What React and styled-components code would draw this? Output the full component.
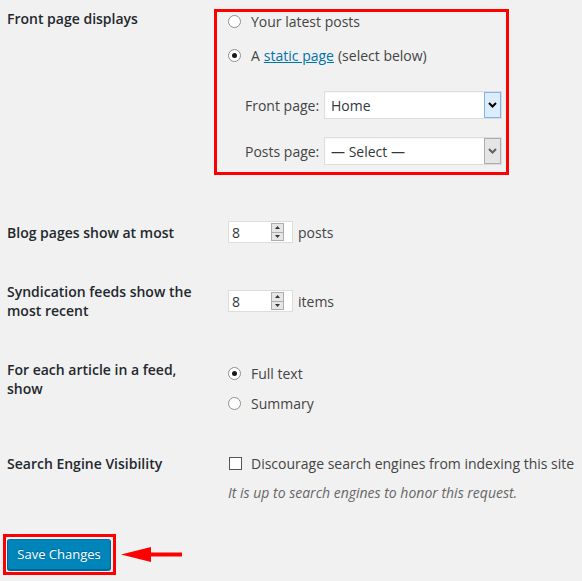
import styled, { createGlobalStyle } from "styled-components";

const GlobalStyle = createGlobalStyle`
  body {
    margin: 0;
    background: #f1f1f1;
    font-family: "Open Sans", "Liberation Sans", sans-serif;
    font-size: 14px;
    color: #444;
  }
`;

const Page = styled.div`
  width: 582px;
  height: 581px;
  overflow: hidden;
`;

const Row = styled.div`
  display: grid;
  grid-template-columns: 214px 1fr;
  align-items: ${(p) => p.$align || "start"};
  margin-top: ${(p) => p.$top || 0}px;
`;

const Label = styled.div`
  padding: ${(p) => p.$pad || 0}px 0 0 7px;
  width: 200px;
  font-weight: 600;
  color: #23282d;
  line-height: 19px;
`;

const Field = styled.div`
  padding: ${(p) => p.$pad || 0}px 0 0 14px;
`;

const Highlight = styled.div`
  margin-top: 9px;
  width: 295px;
  box-sizing: border-box;
  border: 3px solid #ff0000;
  padding: 0 0 7px 11px;
`;

const Line = styled.div`
  display: flex;
  align-items: center;
  height: 19px;
  line-height: 19px;
  margin-top: ${(p) => p.$top || 0}px;
  white-space: nowrap;
`;

const Radio = styled.span`
  width: 13px;
  height: 13px;
  box-sizing: border-box;
  border: 1px solid #8f8f8f;
  border-radius: 50%;
  background: #fff;
  margin-right: 10px;
  display: flex;
  align-items: center;
  justify-content: center;
  flex-shrink: 0;
  &::after {
    content: "";
    width: 5px;
    height: 5px;
    border-radius: 50%;
    background: ${(p) => (p.$checked ? "#1a1a1a" : "transparent")};
  }
`;

const Checkbox = styled.span`
  width: 13px;
  height: 13px;
  box-sizing: border-box;
  border: 1px solid #555;
  background: #fff;
  margin-right: 9px;
  margin-left: 1px;
  flex-shrink: 0;
`;

const Link = styled.a`
  color: #0073aa;
  text-decoration: underline;
  margin: 0 4px;
`;

const SelectRow = styled.div`
  display: flex;
  align-items: center;
  margin-top: ${(p) => p.$top}px;
  padding-left: 17px;
`;

const SelectLabel = styled.span`
  width: 79px;
  color: #444;
`;

const Select = styled.div`
  width: 178px;
  height: 28px;
  box-sizing: border-box;
  border: 1px solid #ddd;
  background: #fff;
  display: flex;
  align-items: center;
  justify-content: space-between;
  color: #32373c;
  padding: 0 0 0 6px;
  box-shadow: inset 0 1px 2px rgba(0, 0, 0, 0.04);
`;

const SelectButton = styled.span`
  width: 17px;
  height: 26px;
  box-sizing: border-box;
  border: 1px solid ${(p) => (p.$active ? "#7eb4ea" : "#adadad")};
  background: ${(p) => (p.$active ? "#dcecfc" : "#e5e5e5")};
  display: flex;
  align-items: center;
  justify-content: center;
  color: ${(p) => (p.$active ? "#000" : "#606060")};
`;

const NumberBox = styled.div`
  width: 65px;
  height: 22px;
  box-sizing: border-box;
  border: 1px solid #ddd;
  background: #fff;
  display: flex;
  align-items: center;
  justify-content: space-between;
  padding: 0 8px 0 3px;
  margin-right: 5px;
  color: #32373c;
`;

const Spinner = styled.span`
  width: 13px;
  height: 18px;
  box-sizing: border-box;
  border: 1px solid #adadad;
  background: #e6e6e6;
  display: flex;
  flex-direction: column;
`;

const SpinHalf = styled.span`
  flex: 1;
  display: flex;
  align-items: center;
  justify-content: center;
  & + & {
    border-top: 1px solid #adadad;
  }
`;

const InlineRow = styled.div`
  display: flex;
  align-items: center;
`;

const Description = styled.p`
  margin: 10px 0 0;
  font-size: 14px;
  font-style: italic;
  line-height: 19px;
  color: #666;
`;

const ButtonRow = styled.div`
  display: flex;
  align-items: center;
  margin-top: 32px;
  padding-left: 3px;
`;

const ButtonFrame = styled.div`
  border: 3px solid #ff0000;
  padding: 2px 2px 2px 1px;
`;

const PrimaryButton = styled.button`
  width: 104px;
  height: 31px;
  box-sizing: border-box;
  background: #0085ba;
  border: 1px solid;
  border-color: #0073aa #006799 #006799;
  border-radius: 3px;
  box-shadow: 0 1px 0 #006799;
  color: #fff;
  font-family: "Open Sans", "Liberation Sans", sans-serif;
  font-size: 13px;
  padding: 0 0 2px;
  text-shadow: 0 -1px 1px #006799;
`;

const Arrow = styled.svg`
  margin-left: 5px;
`;

function Chevron() {
  return (
    <svg width="9" height="6" viewBox="0 0 9 6">
      <path d="M1 1 L4.5 4.5 L8 1" fill="none" stroke="currentColor" strokeWidth="2" />
    </svg>
  );
}

function NumberInput({ value }) {
  return (
    <NumberBox>
      <span>{value}</span>
      <Spinner>
        <SpinHalf>
          <svg width="5" height="3" viewBox="0 0 5 3">
            <path d="M0 3 L2.5 0 L5 3 Z" fill="#333" />
          </svg>
        </SpinHalf>
        <SpinHalf>
          <svg width="5" height="3" viewBox="0 0 5 3">
            <path d="M0 0 L2.5 3 L5 0 Z" fill="#333" />
          </svg>
        </SpinHalf>
      </Spinner>
    </NumberBox>
  );
}

export default function App() {
  return (
    <Page>
      <GlobalStyle />
      <Row>
        <Label $pad={9}>Front page displays</Label>
        <Highlight>
          <Line>
            <Radio />
            Your latest posts
          </Line>
          <Line $top={15}>
            <Radio $checked />A<Link href="#">static page</Link>(select below)
          </Line>
          <SelectRow $top={26}>
            <SelectLabel>Front page:</SelectLabel>
            <Select>
              <span>Home</span>
              <SelectButton $active>
                <Chevron />
              </SelectButton>
            </Select>
          </SelectRow>
          <SelectRow $top={18}>
            <SelectLabel>Posts page:</SelectLabel>
            <Select>
              <span>— Select —</span>
              <SelectButton>
                <Chevron />
              </SelectButton>
            </Select>
          </SelectRow>
        </Highlight>
      </Row>

      <Row $top={46} $align="center">
        <Label>Blog pages show at most</Label>
        <Field>
          <InlineRow>
            <NumberInput value="8" />
            posts
          </InlineRow>
        </Field>
      </Row>

      <Row $top={39} $align="center">
        <Label>Syndication feeds show the most recent</Label>
        <Field>
          <InlineRow>
            <NumberInput value="8" />
            items
          </InlineRow>
        </Field>
      </Row>

      <Row $top={40}>
        <Label>For each article in a feed, show</Label>
        <Field $pad={4}>
          <Line>
            <Radio $checked />
            Full text
          </Line>
          <Line $top={11}>
            <Radio />
            Summary
          </Line>
        </Field>
      </Row>

      <Row $top={41}>
        <Label>Search Engine Visibility</Label>
        <Field>
          <Line>
            <Checkbox />
            Discourage search engines from indexing this site
          </Line>
          <Description>It is up to search engines to honor this request.</Description>
        </Field>
      </Row>

      <ButtonRow>
        <ButtonFrame>
          <PrimaryButton>Save Changes</PrimaryButton>
        </ButtonFrame>
        <Arrow width="61" height="17" viewBox="0 0 61 17">
          <polygon points="0,8.5 30,1 30,16" fill="#ff0000" />
          <rect x="29" y="6.5" width="32" height="4" fill="#ff0000" />
        </Arrow>
      </ButtonRow>
    </Page>
  );
}
